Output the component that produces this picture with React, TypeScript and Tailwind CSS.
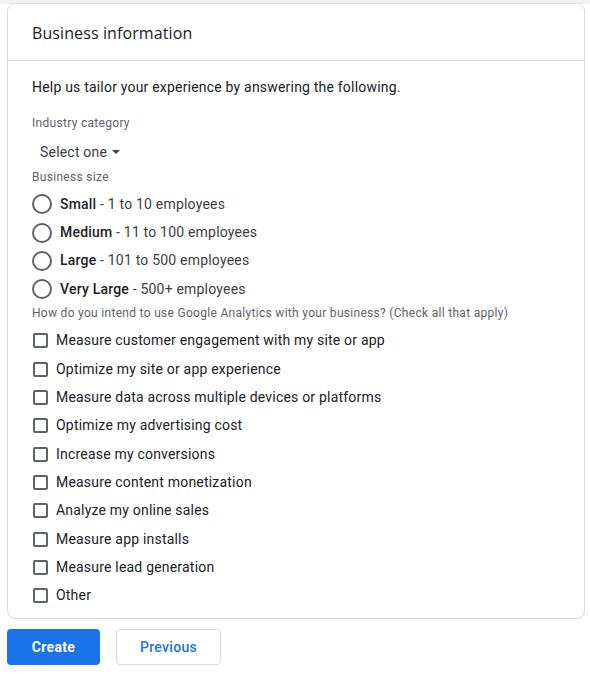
import { FC } from "react";

const sizes = [
  { name: "Small", detail: "1 to 10 employees" },
  { name: "Medium", detail: "11 to 100 employees" },
  { name: "Large", detail: "101 to 500 employees" },
  { name: "Very Large", detail: "500+ employees" },
];

const uses = [
  "Measure customer engagement with my site or app",
  "Optimize my site or app experience",
  "Measure data across multiple devices or platforms",
  "Optimize my advertising cost",
  "Increase my conversions",
  "Measure content monetization",
  "Analyze my online sales",
  "Measure app installs",
  "Measure lead generation",
  "Other",
];

const SizeOption: FC<{ name: string; detail: string }> = ({ name, detail }) => (
  <label className="flex h-[28.4px] cursor-pointer items-center">
    <span className="ml-[24px] box-border h-5 w-5 rounded-full border-2 border-[#5f6368]" />
    <span className="ml-[8px] text-[14px] tracking-[0.2px] text-[#3c4043]">
      <span className="font-medium text-[#202124]">{name}</span> - {detail}
    </span>
  </label>
);

const UseOption: FC<{ label: string }> = ({ label }) => (
  <label className="flex h-[28.35px] cursor-pointer items-center">
    <span className="ml-[25px] box-border h-[15px] w-[15px] rounded-[2px] border-2 border-[#5f6368]" />
    <span className="ml-[8px] text-[14px] tracking-[0.2px] text-[#202124]">{label}</span>
  </label>
);

export default function App() {
  return (
    <div className="min-h-[681px] w-[590px] bg-white font-['Roboto','Liberation_Sans',sans-serif]">
      <div className="h-[4px] bg-[#f1f1f1]" />
      <div className="px-[7px]">
        <div className="-mt-[1px] w-[578px] rounded-[8px] border border-[#dadce0] bg-white">
          <div className="flex h-[57px] items-center border-b border-[#dadce0] px-[24px] pt-[1px]">
            <h2 className="text-[16px] text-[#202124] font-['Open_Sans','Roboto',sans-serif] tracking-[0.1px]">
              Business information
            </h2>
          </div>
          <div className="pb-[8px]">
            <p className="mt-[16px] px-[24px] text-[14px] leading-[20px] tracking-[0.2px] text-[#202124]">
              Help us tailor your experience by answering the following.
            </p>
            <p className="mt-[18px] px-[24px] text-[12px] leading-[16px] tracking-[0.3px] text-[#5f6368]">
              Industry category
            </p>
            <button className="mt-[11px] ml-[32px] flex h-[20px] items-center text-[14px] tracking-[0.2px] text-[#3c4043]">
              Select one
              <svg viewBox="0 0 10 5" className="ml-[5px] h-[4px] w-[8px]">
                <path d="M0 0 L5 5 L10 0 Z" fill="#3c4043" />
              </svg>
            </button>
            <p className="mt-[7px] px-[24px] text-[12px] leading-[16px] tracking-[0.3px] text-[#5f6368]">
              Business size
            </p>
            <div className="mt-[5px]">
              {sizes.map((s) => (
                <SizeOption key={s.name} name={s.name} detail={s.detail} />
              ))}
            </div>
            <p className="mt-[1px] px-[24px] text-[12px] leading-[16px] tracking-[0.3px] text-[#5f6368]">
              How do you intend to use Google Analytics with your business? (Check all that apply)
            </p>
            <div className="mt-[6px]">
              {uses.map((u) => (
                <UseOption key={u} label={u} />
              ))}
            </div>
          </div>
        </div>
        <div className="mt-[10px] flex gap-[16px]">
          <button className="flex h-[36px] w-[93px] items-center justify-center rounded-[4px] bg-[#1a73e8] text-[14px] leading-[20px] font-bold tracking-[0.3px] text-white">
            Create
          </button>
          <button className="flex h-[36px] w-[105px] items-center justify-center rounded-[4px] border border-[#dadce0] bg-white text-[14px] leading-[20px] font-medium tracking-[0.3px] text-[#1a73e8]">
            Previous
          </button>
        </div>
      </div>
    </div>
  );
}
